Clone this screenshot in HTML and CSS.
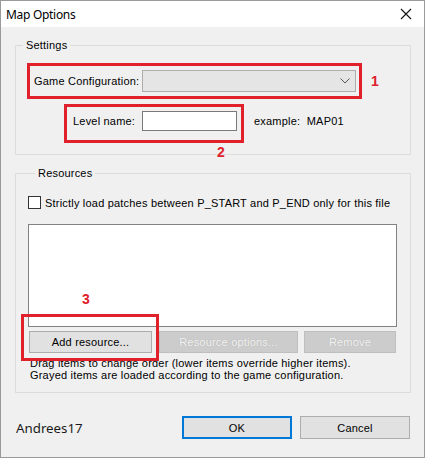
FILE: index.html
```html
<html lang="en">
<head>
    <meta charset="UTF-8">
    <meta name="viewport" content="width=device-width, initial-scale=1.0">
    <title>Map Options</title>
    <link rel="stylesheet" href="styles.css">
</head>
<body>
    <div class="window">
        <div class="titlebar">
            <span class="title">Map Options</span>
            <svg class="close" width="12" height="12" viewBox="0 0 12 12">
                <path d="M1 1 L11 11 M11 1 L1 11" stroke="#111" stroke-width="1.1" fill="none"/>
            </svg>
        </div>
        <div class="content">
            <fieldset class="group settings">
                <legend>Settings</legend>
                <div class="row config-row">
                    <span class="label">Game Configuration:</span>
                    <div class="combo">
                        <svg width="10" height="6" viewBox="0 0 10 6">
                            <path d="M0.5 0.5 L5 5 L9.5 0.5" stroke="#555" stroke-width="1" fill="none"/>
                        </svg>
                    </div>
                </div>
                <div class="row level-row">
                    <span class="label">Level name:</span>
                    <div class="textbox"></div>
                    <span class="hint">example:&nbsp; MAP01</span>
                </div>
            </fieldset>

            <fieldset class="group resources">
                <legend>Resources</legend>
                <div class="check">
                    <span class="checkbox"></span>
                    <span>Strictly load patches between P_START and P_END only for this file</span>
                </div>
                <div class="listbox"></div>
                <div class="res-buttons">
                    <button class="btn add">Add resource...</button>
                    <button class="btn options" disabled>Resource options...</button>
                    <button class="btn remove" disabled>Remove</button>
                </div>
                <p class="help">Drag items to change order (lower items override higher items).<br>Grayed items are loaded according to the game configuration.</p>
            </fieldset>

            <div class="footer">
                <span class="user">Andrees17</span>
                <button class="btn ok">OK</button>
                <button class="btn cancel">Cancel</button>
            </div>
        </div>

        <!-- callouts -->
        <div class="mark mark-1"></div>
        <div class="mark mark-2"></div>
        <div class="mark mark-3"></div>
        <span class="num num-1">1</span>
        <span class="num num-2">2</span>
        <span class="num num-3">3</span>
    </div>
</body>
</html>
```

FILE: styles.css
```css
body {
    margin: 0;
    background: #f0f0f0;
    font-family: "Liberation Sans", Arial, sans-serif;
    font-size: 11px;
    letter-spacing: 0.2px;
    color: #000;
}
.window {
    position: relative;
    width: 425px;
    height: 458px;
    box-sizing: border-box;
    border: 1px solid #9a9a9a;
    background: #f0f0f0;
}
.titlebar {
    height: 26px;
    background: #fff;
    display: flex;
    align-items: center;
    justify-content: space-between;
    padding: 0 12px 0 5px;
}
.title {
    font-family: "Noto Sans", sans-serif;
    font-size: 12px;
    letter-spacing: -0.3px;
    color: #000;
}
.close {
    display: block;
}

.group {
    margin: 0 13px 0 14px;
    padding: 0;
    min-width: 0;
    border: 1px solid #dcdcdc;
}
.group legend {
    margin-left: 7px;
    padding: 0 3px;
    line-height: 13px;
    height: 13px;
}
.settings {
    margin-top: 12px;
    padding-bottom: 23px;
}
.row {
    display: flex;
    align-items: center;
}
.config-row {
    height: 21px;
    margin-top: 18px;
    padding-left: 18px;
}
.config-row .label {
    width: 108px;
}
.combo {
    width: 214px;
    height: 22px;
    box-sizing: border-box;
    background: #e5e5e5;
    border: 1px solid #adadad;
    display: flex;
    align-items: center;
    justify-content: flex-end;
    padding-right: 5px;
}
.combo svg {
    display: block;
}
.level-row {
    height: 20px;
    margin-top: 20px;
    padding-left: 57px;
}
.level-row .label {
    width: 69px;
}
.textbox {
    width: 95px;
    height: 20px;
    box-sizing: border-box;
    background: #fff;
    border: 1px solid #7a7a7a;
}
.hint {
    margin-left: 17px;
}

.resources {
    margin-top: 12px;
    padding: 0 0 11px 12px;
}
.check {
    display: flex;
    align-items: center;
    margin-top: 16px;
    height: 13px;
}
.checkbox {
    width: 13px;
    height: 13px;
    box-sizing: border-box;
    border: 1px solid #333;
    background: #fff;
    margin-right: 4px;
}
.listbox {
    width: 369px;
    height: 103px;
    box-sizing: border-box;
    margin-top: 15px;
    background: #fff;
    border: 1px solid #828282;
}
.res-buttons {
    display: flex;
    margin-top: 4px;
    padding-left: 1px;
}
.btn {
    font-family: "Liberation Sans", Arial, sans-serif;
    font-size: 11px;
    letter-spacing: 0.2px;
    color: #000;
    height: 22px;
    padding: 0;
    background: #e1e1e1;
    border: 1px solid #adadad;
    border-radius: 0;
}
.btn:disabled {
    background: #cccccc;
    border-color: #bfbfbf;
    color: #f4f4f4;
    text-shadow: 0 0 1px #a8a8a8;
}
.add {
    width: 123px;
}
.options {
    width: 139px;
    margin-left: 7px;
}
.remove {
    width: 92px;
    margin-left: 6px;
}
.help {
    margin: 4px 0 0 2px;
    line-height: 12px;
}

.footer {
    display: flex;
    align-items: center;
    margin-top: 23px;
    padding: 0 14px 0 15px;
}
.user {
    flex: 1;
    font-family: "Noto Sans", sans-serif;
    font-size: 13.3px;
    letter-spacing: 0;
    color: #1a1a1a;
    margin-top: 1px;
}
.ok, .cancel {
    width: 110px;
    height: 23px;
}
.ok {
    border: 2px solid #0078d7;
}
.cancel {
    margin-left: 8px;
}

/* red callout frames and numbers */
.mark {
    position: absolute;
    box-sizing: border-box;
    border: 3px solid #e0202a;
}
.mark-1 {
    left: 26px;
    top: 62px;
    width: 335px;
    height: 36px;
}
.mark-2 {
    left: 63px;
    top: 103px;
    width: 180px;
    height: 39px;
}
.mark-3 {
    left: 20px;
    top: 313px;
    width: 138px;
    height: 47px;
}
.num {
    position: absolute;
    font-family: "Liberation Sans", Arial, sans-serif;
    font-weight: bold;
    font-size: 14px;
    line-height: 14px;
    color: #e0202a;
}
.num-1 {
    left: 370px;
    top: 73px;
}
.num-2 {
    left: 216px;
    top: 144px;
}
.num-3 {
    left: 81px;
    top: 291px;
}
```
